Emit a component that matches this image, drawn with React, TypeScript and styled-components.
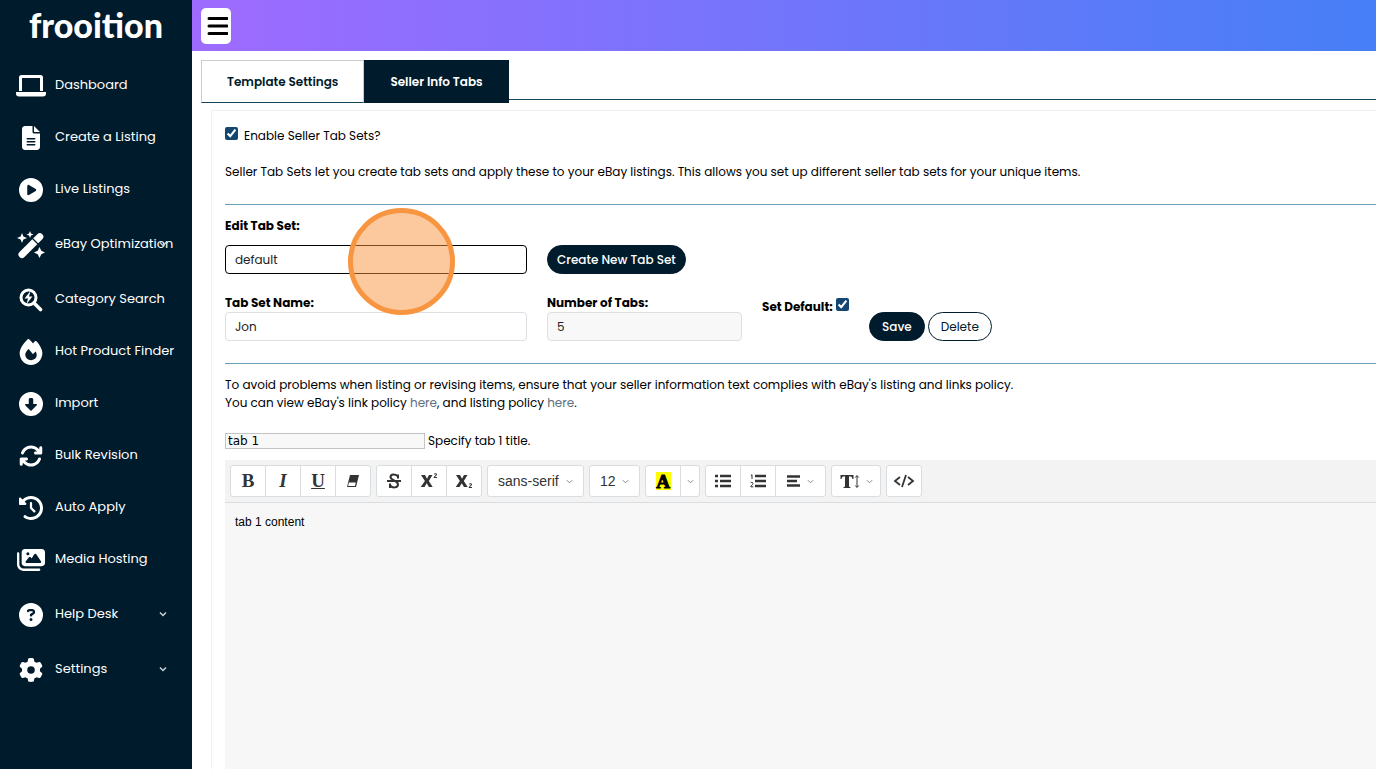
import React from "react";
import styled, { createGlobalStyle, css } from "styled-components";
import {
  FaFileLines, FaCirclePlay, FaFire, FaCircleDown, FaArrowsRotate,
  FaClockRotateLeft, FaImages, FaCircleQuestion, FaGear,
} from "react-icons/fa6";

const navy = "#001b2c";
const sans = `Poppins, Inter, "Liberation Sans", sans-serif`;

const GlobalStyle = createGlobalStyle`
  *, *::before, *::after { box-sizing: border-box; }
  body { margin: 0; background: #fff; color: #000; font: 400 12px/18px ${sans}; overflow: hidden; }
  button, input, select { font: inherit; color: inherit; margin: 0; }
  button { cursor: pointer; }
`;

const Shell = styled.div`
  display: flex;
  min-height: 100vh;
`;

const Sidebar = styled.aside`
  flex: 0 0 192px;
  background: ${navy};
  color: #fff;
`;

const Logo = styled.a`
  display: block;
  height: 59px;
  padding-top: 6px;
  color: #fff;
  text-align: center;
  text-decoration: none;
  font: 900 34px/38px Lato, sans-serif;
`;

const NavItem = styled.a<{ $parent?: boolean }>`
  display: flex;
  align-items: center;
  height: 52px;
  margin: ${(p) => (p.$parent ? "3px 0" : "0")};
  padding: 0 25px 0 16px;
  color: #fff;
  text-decoration: none;
  font-size: 13px;
  line-height: 20px;
`;

const NavIcon = styled.span`
  display: flex;
  justify-content: center;
  flex: 0 0 30px;
  margin-right: 9px;
  padding-top: 2px;
  font-size: 24px;
`;

const NavLabel = styled.span`
  flex: 1 0 0;
  width: 0;
  white-space: nowrap;
`;

const Main = styled.main`
  flex: 1;
  min-width: 0;
  display: flex;
  flex-direction: column;
`;

const TopBar = styled.header`
  display: flex;
  align-items: flex-start;
  height: 51px;
  padding: 8px 9px;
  background: linear-gradient(90deg, #9f6bff, #467ff7);
`;

const MenuButton = styled.button`
  display: flex;
  align-items: center;
  justify-content: center;
  width: 30px;
  height: 36px;
  padding: 0;
  border: 0;
  border-radius: 5px;
  background: #fff;
`;

const Tabs = styled.div`
  display: flex;
  align-items: flex-start;
  margin: 9px 0 0 9px;
  height: 40px;
  border-bottom: 1px solid #17455c;
`;

const Tab = styled.button<{ $active?: boolean }>`
  height: 43px;
  padding: 0 25px;
  border: 1px solid ${(p) => (p.$active ? navy : "#ccc")};
  border-bottom-color: ${(p) => (p.$active ? navy : "#17455c")};
  background: ${(p) => (p.$active ? navy : "#fff")};
  color: ${(p) => (p.$active ? "#fff" : navy)};
  font-weight: 600;
`;

const Panel = styled.section`
  flex: 1;
  display: flex;
  flex-direction: column;
  margin: 10px 0 0 19px;
  padding: 16px 0 0 13px;
  border: solid #f0f0f4;
  border-width: 1px 0 0 1px;
`;

const CheckLabel = styled.label<{ $bold?: boolean }>`
  display: flex;
  align-items: center;
  gap: ${(p) => (p.$bold ? "3px" : "6px")};
  padding-top: ${(p) => (p.$bold ? "4px" : "0")};
  font-weight: ${(p) => (p.$bold ? 700 : 400)};
  white-space: nowrap;
`;

const Checkbox = styled.input.attrs({ type: "checkbox" })`
  width: 13px;
  height: 13px;
  margin-bottom: 5px;
  accent-color: #144672;
`;

const Intro = styled.p`
  margin: 18px 0 23px;
`;

const Divider = styled.hr`
  width: 100%;
  height: 1px;
  margin: 0;
  border: 0;
  background: #6d9fb8;
`;

const TabSetForm = styled.form`
  display: grid;
  grid-template-columns: 302px 195px 87px auto;
  justify-content: start;
  column-gap: 20px;
  padding: 12px 0 22px;
`;

const Field = styled.div<{ $gap?: number }>`
  display: flex;
  flex-direction: column;
  gap: ${(p) => p.$gap ?? 0}px;
`;

const FieldLabel = styled.label`
  font-weight: 700;
`;

const controlBox = css`
  width: 100%;
  height: 29px;
  padding: 0 9px;
  border: 1px solid #dcdfe3;
  border-radius: 4px;
  background: #fff;
  color: #222;
`;

const TextInput = styled.input`
  ${controlBox}
  &:read-only { background: #f8f8f9; }
`;

const SetSelect = styled.select`
  ${controlBox}
  appearance: none;
  border-color: #000;
`;

const Actions = styled.div<{ $wide?: boolean }>`
  display: flex;
  align-items: flex-end;
  gap: 3px;
  grid-column: ${(p) => (p.$wide ? "2 / -1" : "auto")};
`;

const Pill = styled.button<{ $outline?: boolean; $tight?: boolean }>`
  height: 29px;
  padding: 0 ${(p) => (p.$tight ? 9 : 12)}px;
  border: 1px solid ${navy};
  border-radius: 15px;
  background: ${(p) => (p.$outline ? "#fff" : navy)};
  color: ${(p) => (p.$outline ? navy : "#fff")};
  font-weight: ${(p) => (p.$outline ? 400 : 500)};
  white-space: nowrap;
`;

const RowGap = styled.div`
  grid-column: 1 / -1;
  height: 20px;
`;

const Note = styled.p`
  margin: 12px 0 20px;
`;

const PolicyLink = styled.a`
  color: #5f7080;
  text-decoration: none;
`;

const TitleRow = styled.label`
  display: flex;
  align-items: center;
  gap: 3px;
  margin-bottom: 10px;
`;

const TitleInput = styled.input`
  width: 200px;
  height: 16px;
  padding: 0 2px;
  border: 1px solid #c4c4c4;
  background: #f8f8f8;
  font: 12px/14px "DejaVu Sans", "Noto Sans", sans-serif;
`;

const Editor = styled.div`
  flex: 1;
  display: flex;
  flex-direction: column;
  background: #f7f7f7;
`;

const Toolbar = styled.div`
  display: flex;
  gap: 5px;
  padding: 5px;
  background: #f3f3f3;
  border-bottom: 1px solid #dadddf;
`;

const Group = styled.div`
  display: flex;
  height: 32px;
  border: 1px solid #dadddf;
  border-radius: 3px;
  background: #fff;
  color: #333;
`;

const Tool = styled.button<{ $w?: number }>`
  display: flex;
  align-items: center;
  justify-content: center;
  gap: 6px;
  width: ${(p) => p.$w ?? 35}px;
  padding: 0;
  border: 0;
  background: none;
  font: 700 19px/24px "Liberation Serif", serif;
  &:first-child:not(:only-child) { width: 34px; }
  & + & { border-left: 1px solid #dadddf; }
`;

const PickerFrame = styled.span<{ $w: number }>`
  display: grid;
  align-items: center;
  width: ${(p) => p.$w}px;
  & > * { grid-area: 1 / 1; }
  & > svg { justify-self: end; margin-right: 10px; pointer-events: none; }
`;

const Picker = styled.select`
  appearance: none;
  width: 100%;
  height: 30px;
  padding: 0 10px;
  border: 0;
  background: none;
  color: #333;
  font: 14px/20px "Liberation Sans", sans-serif;
`;

const Highlight = styled.span`
  width: 15px;
  height: 18px;
  background: #ff0;
  color: #000;
  line-height: 19px;
  -webkit-text-stroke: 1px #000;
`;

const Content = styled.div`
  padding: 10px;
  font: 12px/18px "Liberation Sans", sans-serif;
`;

const MarkerAnchor = styled.div`
  position: relative;
`;

/* Ring that marks where the walkthrough asks the user to click */
const ClickMarker = styled.div`
  position: absolute;
  left: 123px;
  top: -37px;
  width: 107px;
  height: 107px;
  border: 5px solid #f79540;
  border-radius: 50%;
  background: rgba(249, 148, 64, 0.5);
  pointer-events: none;
`;

const Chevron = ({ thin }: { thin?: boolean }) => (
  <svg
    width={thin ? 7 : 8}
    height={thin ? 7 : 8}
    viewBox="0 0 8 8"
    fill="none"
    stroke={thin ? "#777" : "#c9d3da"}
    strokeWidth={thin ? 1 : 1.5}
  >
    <path d="M1 2.500 4 5.500 7 2.500" />
  </svg>
);

const LaptopIcon = () => (
  <svg width="30" height="22" viewBox="0 0 30 22" fill="#fff">
    <path fillRule="evenodd" d="M5.500 0H24.500A2.500 2.500 0 0 1 27 2.500V16H24V3H6V16H3V2.500A2.500 2.500 0 0 1 5.500 0Z" />
    <path d="M0 17H30V18.500A3 3 0 0 1 27 21.500H3A3 3 0 0 1 0 18.500Z" />
  </svg>
);

const WandIcon = () => (
  <svg width="28" height="28" viewBox="0 0 28 28" fill="#fff">
    <path d="M5 23.500 22.800 5.700" stroke="#fff" strokeWidth="7" strokeLinecap="round" />
    <path d="M15.500 7.500 21 13" stroke="#001b2c" strokeWidth="1.300" />
    <path d="M5 2 6.400 5.600 10 7 6.400 8.400 5 12 3.600 8.400 0 7 3.600 5.600Z" />
    <path d="M13 0 14 2.500 16.500 3.500 14 4.500 13 7 12 4.500 9.500 3.500 12 2.500Z" />
    <path d="M22.500 16 24.300 19.700 28 21.500 24.300 23.300 22.500 27 20.700 23.300 17 21.500 20.700 19.700Z" />
  </svg>
);

const BoltSearchIcon = () => (
  <svg width="24" height="24" viewBox="0 0 24 24" fill="none">
    <circle cx="9.500" cy="9.500" r="7.500" stroke="#fff" strokeWidth="3" />
    <path d="m15 15 6.500 6.500" stroke="#fff" strokeWidth="3.600" strokeLinecap="round" />
    <path d="M11.500 3 5.500 10.500H9L7.500 16 13.500 8.500H10Z" fill="#fff" />
  </svg>
);

const EraserIcon = () => (
  <svg width="14" height="14" viewBox="0 0 14 14">
    <path d="M4 1H13L10 13H1Z" fill="#333" />
    <path d="M2.900 8.500H9.800L9 12H2.100Z" fill="#fff" />
  </svg>
);

const ScriptIcon = ({ sub }: { sub?: boolean }) => (
  <svg width="18" height="18" viewBox="0 0 18 18" fill="#333">
    <path d="M1 3H5L7 6.700 9 3H12.500L8.800 9 12.700 15H9L6.700 11.300 4.500 15H.7L4.900 9Z" />
    <path transform={sub ? "translate(0 10)" : undefined} d="M14 2.200C14.300 1 17 1 17 2.600 17 3.600 15.500 4.200 15.100 5H17V6H13.800V5C14.500 3.900 15.900 3.300 15.900 2.600 15.900 2 15 2 14.900 2.600Z" />
  </svg>
);

const StrikeIcon = () => (
  <svg width="14" height="16" viewBox="0 0 14 16" fill="none" stroke="#333">
    <path d="M11 5.500V1.500M11 3.500C9 .5 3.500.8 3.500 4 3.500 7.500 11 7.500 11 11.500 11 15 5 15.500 3 12M3 10.500V15" strokeWidth="2" />
    <path d="M0 8H14" strokeWidth="2" />
  </svg>
);

const ListIcon = ({ numbered }: { numbered?: boolean }) => (
  <svg width="16" height="14" viewBox="0 0 16 14" stroke="#333" fill="none">
    <path d="M5 2H16M5 7H16M5 12H16" strokeWidth="2.500" />
    {numbered ? (
      <path d="M.8 1.500 2 .7V5M.6 9.200C.8 7.900 3 8.100 3 9.400 3 10.700.8 11.600.8 12.800H3.400" />
    ) : (
      <path d="M0 2H3M0 7H3M0 12H3" strokeWidth="2.600" />
    )}
  </svg>
);

const AlignIcon = () => (
  <svg width="14" height="12" viewBox="0 0 14 12" stroke="#333" strokeWidth="2.500">
    <path d="M0 1.500H13M0 6H10M0 10.500H13" />
  </svg>
);

const LineHeightIcon = () => (
  <svg width="20" height="16" viewBox="0 0 20 16" fill="#333">
    <path d="M.5 2H13.500V6H12.500C12 3.800 11.500 3.200 9 3.200V13C9 13.900 9.500 14 10.500 14.200V15H3.500V14.200C4.500 14 5 13.900 5 13V3.200C2.500 3.200 2 3.800 1.500 6H.5Z" />
    <path d="M17 3V14M15.300 4.500 17 2.500 18.700 4.500M15.300 12.500 17 14.500 18.700 12.500" fill="none" stroke="#333" />
  </svg>
);

const CodeIcon = () => (
  <svg width="22" height="14" viewBox="0 0 22 14" fill="none" stroke="#333" strokeWidth="1.800">
    <path d="M7 3 2 7 7 11M15 3 20 7 15 11M13 1 9 13" />
  </svg>
);

const BurgerIcon = () => (
  <svg width="24" height="18" viewBox="0 0 24 18" stroke="#000" strokeWidth="3" strokeLinecap="round">
    <path d="M5 1.500H23M5 9H23M5 16.500H23" />
  </svg>
);

const navItems: { label: string; icon: React.ReactNode; parent?: boolean }[] = [
  { label: "Dashboard", icon: <LaptopIcon /> },
  { label: "Create a Listing", icon: <FaFileLines /> },
  { label: "Live Listings", icon: <FaCirclePlay /> },
  { label: "eBay Optimization", icon: <WandIcon />, parent: true },
  { label: "Category Search", icon: <BoltSearchIcon /> },
  { label: "Hot Product Finder", icon: <FaFire size={26} /> },
  { label: "Import", icon: <FaCircleDown /> },
  { label: "Bulk Revision", icon: <FaArrowsRotate /> },
  { label: "Auto Apply", icon: <FaClockRotateLeft /> },
  { label: "Media Hosting", icon: <FaImages size={28} /> },
  { label: "Help Desk", icon: <FaCircleQuestion />, parent: true },
  { label: "Settings", icon: <FaGear />, parent: true },
];

export default function App() {
  return (
    <Shell>
      <GlobalStyle />
      <Sidebar>
        <Logo href="#">frooition</Logo>
        <nav>
          {navItems.map((item) => (
            <NavItem key={item.label} href="#" $parent={item.parent}>
              <NavIcon>{item.icon}</NavIcon>
              <NavLabel>{item.label}</NavLabel>
              {item.parent && <Chevron />}
            </NavItem>
          ))}
        </nav>
      </Sidebar>
      <Main>
        <TopBar>
          <MenuButton aria-label="Toggle menu"><BurgerIcon /></MenuButton>
        </TopBar>
        <Tabs role="tablist">
          <Tab role="tab">Template Settings</Tab>
          <Tab role="tab" aria-selected $active>Seller Info Tabs</Tab>
        </Tabs>
        <Panel>
          <CheckLabel>
            <Checkbox defaultChecked />
            Enable Seller Tab Sets?
          </CheckLabel>
          <Intro>
            Seller Tab Sets let you create tab sets and apply these to your eBay listings. This allows you set up different seller tab sets for your unique items.
          </Intro>
          <Divider />
          <TabSetForm onSubmit={(e) => e.preventDefault()}>
            <Field $gap={10}>
              <FieldLabel htmlFor="edit-set">Edit Tab Set:</FieldLabel>
              <MarkerAnchor>
                <SetSelect id="edit-set"><option>default</option></SetSelect>
                <ClickMarker />
              </MarkerAnchor>
            </Field>
            <Actions $wide>
              <Pill type="button" $tight>Create New Tab Set</Pill>
            </Actions>
            <RowGap />
            <Field>
              <FieldLabel htmlFor="set-name">Tab Set Name:</FieldLabel>
              <TextInput id="set-name" defaultValue="Jon" />
            </Field>
            <Field>
              <FieldLabel htmlFor="tab-count">Number of Tabs:</FieldLabel>
              <TextInput id="tab-count" defaultValue="5" readOnly />
            </Field>
            <Field>
              <CheckLabel $bold>
                Set Default:
                <Checkbox defaultChecked />
              </CheckLabel>
            </Field>
            <Actions>
              <Pill type="submit">Save</Pill>
              <Pill type="button" $outline>Delete</Pill>
            </Actions>
          </TabSetForm>
          <Divider />
          <Note>
            To avoid problems when listing or revising items, ensure that your seller information text complies with eBay's listing and links policy.
            <br />
            You can view eBay's link policy <PolicyLink href="#">here</PolicyLink>, and listing policy <PolicyLink href="#">here</PolicyLink>.
          </Note>
          <TitleRow>
            <TitleInput defaultValue="tab 1" />
            Specify tab 1 title.
          </TitleRow>
          <Editor>
            <Toolbar role="toolbar">
              <Group>
                <Tool>B</Tool>
                <Tool><i>I</i></Tool>
                <Tool><u>U</u></Tool>
                <Tool aria-label="Clear formatting"><EraserIcon /></Tool>
              </Group>
              <Group>
                <Tool aria-label="Strikethrough"><StrikeIcon /></Tool>
                <Tool aria-label="Superscript"><ScriptIcon /></Tool>
                <Tool aria-label="Subscript"><ScriptIcon sub /></Tool>
              </Group>
              <Group>
                <PickerFrame $w={95}>
                  <Picker aria-label="Font family"><option>sans-serif</option></Picker>
                  <Chevron thin />
                </PickerFrame>
              </Group>
              <Group>
                <PickerFrame $w={49}>
                  <Picker aria-label="Font size"><option>12</option></Picker>
                  <Chevron thin />
                </PickerFrame>
              </Group>
              <Group>
                <Tool aria-label="Highlight colour"><Highlight>A</Highlight></Tool>
                <Tool $w={19} aria-label="More colours"><Chevron thin /></Tool>
              </Group>
              <Group>
                <Tool aria-label="Bulleted list"><ListIcon /></Tool>
                <Tool aria-label="Numbered list"><ListIcon numbered /></Tool>
                <Tool $w={50} aria-label="Alignment"><AlignIcon /><Chevron thin /></Tool>
              </Group>
              <Group>
                <Tool $w={48} aria-label="Line height"><LineHeightIcon /><Chevron thin /></Tool>
              </Group>
              <Group>
                <Tool $w={34} aria-label="View source"><CodeIcon /></Tool>
              </Group>
            </Toolbar>
            <Content contentEditable suppressContentEditableWarning>tab 1 content</Content>
          </Editor>
        </Panel>
      </Main>
    </Shell>
  );
}
